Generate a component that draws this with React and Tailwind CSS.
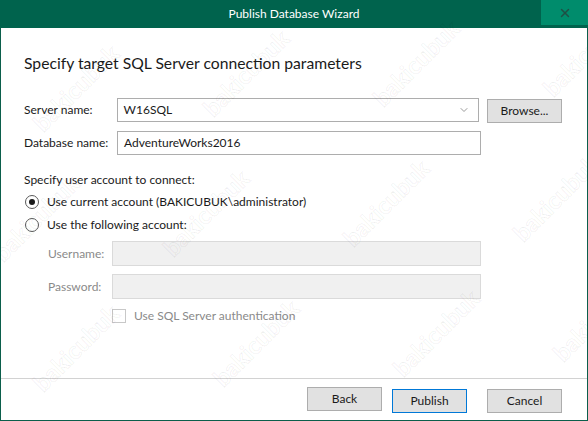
import { ChevronDown, X } from "lucide-react"

const font = { fontFamily: '"Segoe UI", Lato, "Noto Sans", sans-serif' }

const marks = [
    [20, 70], [190, 55], [360, 45], [530, 35],
    [-20, 200], [150, 195], [330, 185], [500, 180],
    [20, 330], [200, 325], [380, 315], [540, 300],
]

const Watermarks = () => (
    <div className="pointer-events-none absolute inset-0 overflow-hidden" aria-hidden="true">
        {marks.map(([x, y], i) => (
            <span
                key={i}
                className="absolute text-[24px] font-bold text-transparent -rotate-45 select-none"
                style={{ left: x, top: y, WebkitTextStroke: "1px rgba(0,0,0,0.06)" }}
            >
                bakicubuk
            </span>
        ))}
    </div>
)

const Button = ({ children, primary }) => (
    <button
        className={`w-[75px] h-[24px] text-[12px] text-[#1a1a1a] bg-[#e1e1e1] border ${
            primary ? "border-[#0078d7]" : "border-[#adadad]"
        }`}
    >
        {children}
    </button>
)

const Radio = ({ checked, label }) => (
    <div className="flex items-center h-[20px]">
        <span className="w-[14px] h-[14px] ml-[1px] rounded-full border border-[#5a5a5a] bg-white flex items-center justify-center">
            {checked && <span className="w-[6px] h-[6px] rounded-full bg-[#1a1a1a]" />}
        </span>
        <span className="ml-[8px] text-[12px] text-[#1a1a1a]">{label}</span>
    </div>
)

export default function App() {
    return (
        <div
            className="relative w-[588px] h-[421px] flex flex-col bg-white border-x border-b border-[#0b5e4b]"
            style={font}
        >
            {/* TITLE BAR */}
            <div className="relative h-[28px] -mx-px bg-[#00634d] flex items-center justify-center text-[12px] text-white">
                Publish Database Wizard
                <div className="absolute right-0 top-0 w-[47px] h-[25px] bg-[#008c6c] flex items-center justify-center">
                    <X className="w-[14px] h-[14px] text-[#1f4f44]" strokeWidth={2.5} />
                </div>
            </div>

            {/* BODY */}
            <div className="flex-1 flex flex-col pl-[23px] pr-[25px]">
                <h1 className="mt-[25px] text-[15.7px] text-[#1a1a1a] leading-[20px]">
                    Specify target SQL Server connection parameters
                </h1>

                <div className="mt-[25px] flex items-center h-[24px]">
                    <span className="w-[93px] text-[12px] text-[#1a1a1a]">Server name:</span>
                    <div className="w-[364px] h-[24px] border border-[#adadad] flex items-center justify-between pl-[6px] pr-[8px] text-[12px] text-[#1a1a1a]">
                        W16SQL
                        <ChevronDown className="w-[12px] h-[12px] text-[#9a9a9a]" strokeWidth={2} />
                    </div>
                    <div className="ml-[8px]">
                        <Button>Browse...</Button>
                    </div>
                </div>

                <div className="mt-[9px] flex items-center h-[24px]">
                    <span className="w-[93px] text-[12px] text-[#1a1a1a]">Database name:</span>
                    <div className="w-[364px] h-[24px] border border-[#adadad] flex items-center pl-[6px] text-[12px] text-[#1a1a1a]">
                        AdventureWorks2016
                    </div>
                </div>

                <div className="mt-[17px] text-[12px] text-[#1a1a1a] leading-[16px]">
                    Specify user account to connect:
                </div>
                <div className="mt-[4px] flex flex-col gap-[3px]">
                    <Radio checked label="Use current account (BAKICUBUK\administrator)" />
                    <Radio label="Use the following account:" />
                </div>

                <div className="mt-[6px] pl-[24px] flex flex-col gap-[8px]">
                    <div className="flex items-center h-[25px]">
                        <span className="w-[64px] text-[12px] text-[#8a8a8a]">Username:</span>
                        <div className="w-[369px] h-[25px] bg-[#f0f0f0] border border-[#dadada]" />
                    </div>
                    <div className="flex items-center h-[25px]">
                        <span className="w-[64px] text-[12px] text-[#8a8a8a]">Password:</span>
                        <div className="w-[369px] h-[25px] bg-[#f0f0f0] border border-[#dadada]" />
                    </div>
                    <div className="flex items-center pl-[64px] h-[16px] mt-[1px]">
                        <span className="w-[14px] h-[14px] border border-[#c8c8c8] bg-white" />
                        <span className="ml-[8px] text-[12px] text-[#8a8a8a]">Use SQL Server authentication</span>
                    </div>
                </div>
            </div>

            {/* FOOTER */}
            <div className="h-[42px] border-t border-[#d2d2d2] flex items-start justify-end pt-[8px] pr-[25px]">
                <Button>Back</Button>
                <div className="ml-[10px]">
                    <Button primary>Publish</Button>
                </div>
                <div className="ml-[20px]">
                    <Button>Cancel</Button>
                </div>
            </div>

            <Watermarks />
        </div>
    )
}
